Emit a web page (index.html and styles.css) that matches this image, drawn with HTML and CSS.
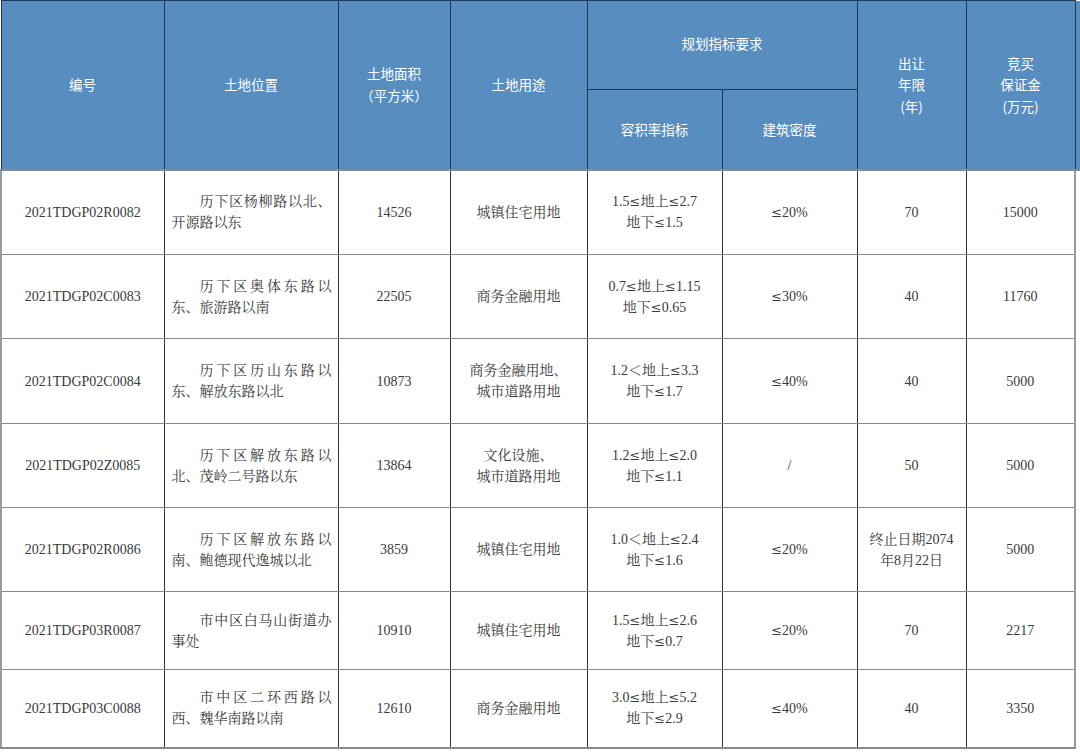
FILE: index.html
```html
<!DOCTYPE html>
<html lang="zh-CN">
<head>
<meta charset="utf-8">
<title>土地出让</title>
<link rel="stylesheet" href="styles.css">
</head>
<body>
<table class="land">
  <colgroup>
    <col class="c1"><col class="c2"><col class="c3"><col class="c4"><col class="c5"><col class="c6"><col class="c7"><col class="c8"><col class="c9">
  </colgroup>
  <thead>
    <tr class="h1">
      <th rowspan="2">编号</th>
      <th rowspan="2">土地位置</th>
      <th rowspan="2">土地面积<br>（平方米）</th>
      <th rowspan="2">土地用途</th>
      <th colspan="2" class="group">规划指标要求</th>
      <th rowspan="2">出让<br>年限<br>(年)</th>
      <th rowspan="2">竞买<br>保证金<br>(万元)</th>
      <th rowspan="2" class="extra"></th>
    </tr>
    <tr class="h2">
      <th>容积率指标</th>
      <th>建筑密度</th>
    </tr>
  </thead>
  <tbody>
    <tr class="r85">
      <td>2021TDGP02R0082</td>
      <td class="loc">历下区杨柳路以北、开源路以东</td>
      <td>14526</td>
      <td>城镇住宅用地</td>
      <td>1.5<span class="le">≤</span>地上<span class="le">≤</span>2.7<br>地下<span class="le">≤</span>1.5</td>
      <td><span class="le">≤</span>20%</td>
      <td>70</td>
      <td>15000</td>
      <td class="extra"></td>
    </tr>
    <tr class="r84">
      <td>2021TDGP02C0083</td>
      <td class="loc">历下区奥体东路以东、旅游路以南</td>
      <td>22505</td>
      <td>商务金融用地</td>
      <td>0.7<span class="le">≤</span>地上<span class="le">≤</span>1.15<br>地下<span class="le">≤</span>0.65</td>
      <td><span class="le">≤</span>30%</td>
      <td>40</td>
      <td>11760</td>
      <td class="extra"></td>
    </tr>
    <tr class="r85">
      <td>2021TDGP02C0084</td>
      <td class="loc">历下区历山东路以东、解放东路以北</td>
      <td>10873</td>
      <td>商务金融用地、<br>城市道路用地</td>
      <td>1.2＜地上<span class="le">≤</span>3.3<br>地下<span class="le">≤</span>1.7</td>
      <td><span class="le">≤</span>40%</td>
      <td>40</td>
      <td>5000</td>
      <td class="extra"></td>
    </tr>
    <tr class="r84">
      <td>2021TDGP02Z0085</td>
      <td class="loc">历下区解放东路以北、茂岭二号路以东</td>
      <td>13864</td>
      <td>文化设施、<br>城市道路用地</td>
      <td>1.2<span class="le">≤</span>地上<span class="le">≤</span>2.0<br>地下<span class="le">≤</span>1.1</td>
      <td>/</td>
      <td>50</td>
      <td>5000</td>
      <td class="extra"></td>
    </tr>
    <tr class="r84">
      <td>2021TDGP02R0086</td>
      <td class="loc">历下区解放东路以南、鲍德现代逸城以北</td>
      <td>3859</td>
      <td>城镇住宅用地</td>
      <td>1.0＜地上<span class="le">≤</span>2.4<br>地下<span class="le">≤</span>1.6</td>
      <td><span class="le">≤</span>20%</td>
      <td>终止日期2074<br>年8月22日</td>
      <td>5000</td>
      <td class="extra"></td>
    </tr>
    <tr class="r78">
      <td>2021TDGP03R0087</td>
      <td class="loc">市中区白马山街道办事处</td>
      <td>10910</td>
      <td>城镇住宅用地</td>
      <td>1.5<span class="le">≤</span>地上<span class="le">≤</span>2.6<br>地下<span class="le">≤</span>0.7</td>
      <td><span class="le">≤</span>20%</td>
      <td>70</td>
      <td>2217</td>
      <td class="extra"></td>
    </tr>
    <tr class="r78">
      <td>2021TDGP03C0088</td>
      <td class="loc">市中区二环西路以西、魏华南路以南</td>
      <td>12610</td>
      <td>商务金融用地</td>
      <td>3.0<span class="le">≤</span>地上<span class="le">≤</span>5.2<br>地下<span class="le">≤</span>2.9</td>
      <td><span class="le">≤</span>40%</td>
      <td>40</td>
      <td>3350</td>
      <td class="extra"></td>
    </tr>
  </tbody>
</table>
</body>
</html>
```
FILE: styles.css
```css
html, body {
  margin: 0;
  padding: 0;
  background: #ffffff;
  overflow: hidden;
}

.land {
  border-collapse: collapse;
  table-layout: fixed;
  width: 1080px;
}

.c1 { width: 163px; }
.c2 { width: 174px; }
.c3 { width: 112px; }
.c4 { width: 137px; }
.c5 { width: 135px; }
.c6 { width: 135px; }
.c7 { width: 109px; }
.c8 { width: 109px; }
.c9 { width: 6px; }

.land th {
  background: #578dbf;
  color: #ffffff;
  font-family: "Noto Sans CJK SC", "Noto Sans", sans-serif;
  font-weight: 400;
  font-size: 13.5px;
  line-height: 21.5px;
  text-align: center;
  vertical-align: middle;
  padding: 0;
  border: 1px solid #1e3752;
}

.land thead tr.h2 th {
  border-bottom: 2px solid #7d8c9b;
}

.land thead tr.h1 th[rowspan] {
  border-bottom: 2px solid #7d8c9b;
}

.h1 { height: 89px; }
.h2 { height: 80px; }

.land th.group {
  padding-bottom: 2px;
}

.land th.extra {
  border-right: none;
  border-top: none;
}

.land td {
  font-family: "Liberation Serif", "Noto Serif CJK SC", "Noto Sans CJK SC", serif;
  font-size: 14px;
  line-height: 21px;
  color: #3a3a3a;
  text-align: center;
  vertical-align: middle;
  padding: 0;
  border-top: 1px solid #8a8a8a;
  border-bottom: 1px solid #8a8a8a;
  border-left: 1px solid #333333;
  border-right: 1px solid #333333;
}

.land td .le {
  font-family: "DejaVu Serif", "Liberation Serif", serif;
  font-size: 13px;
}

.land td:first-child {
  border-left: 2px solid #9a9a9a;
}

.land td.loc {
  text-align: justify;
  text-indent: 2em;
  padding: 0 6px 0 7px;
}

.land td.extra {
  border: none;
  border-left: 2px solid #9a9a9a;
}

.land tbody tr:last-child td {
  border-bottom: 2px solid #8a8a8a;
}

.land tbody tr:last-child td.extra {
  border-bottom: none;
}

.r85 { height: 85px; }
.r84 { height: 84px; }
.r78 { height: 78px; }
```
